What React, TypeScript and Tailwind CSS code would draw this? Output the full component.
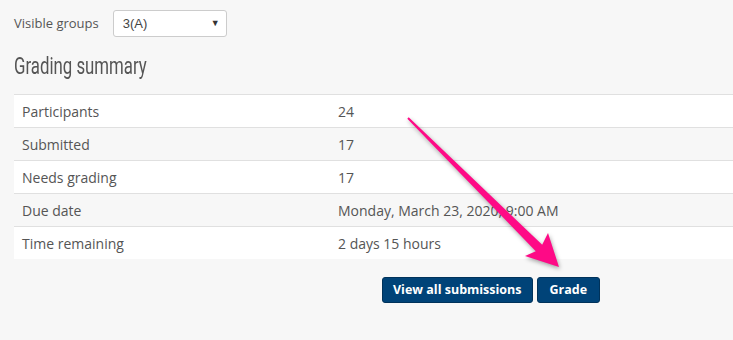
const rows = [
  ["Participants", "24"],
  ["Submitted", "17"],
  ["Needs grading", "17"],
  ["Due date", "Monday, March 23, 2020, 9:00 AM"],
  ["Time remaining", "2 days 15 hours"],
];

export default function App() {
  return (
    <div className="relative h-[340px] w-[733px] overflow-hidden bg-[#f7f7f7] font-['Open_Sans',sans-serif] text-[#555]">
      {/* group selector */}
      <div className="flex items-center gap-[14px] pl-[14px] pt-[10px]">
        <span className="text-[13px]">Visible groups</span>
        <div className="flex h-[27px] w-[114px] items-center justify-between rounded-[3px] border border-[#ccc] bg-white pl-[9px] pr-[6px] font-['Liberation_Sans',Arial,sans-serif] text-[13px] text-[#444]">
          <span>3(A)</span>
          <span className="text-[9px] text-[#333]">▼</span>
        </div>
      </div>

      <h2 className="mt-[14px] pl-[14px] text-[#555] leading-[30px]">
        <span className="inline-block origin-left scale-x-[0.7] font-['Roboto',sans-serif] text-[24px]">
          Grading summary
        </span>
      </h2>

      {/* summary table */}
      <div className="mt-[11px] pl-[14px]">
        {rows.map(([label, value], i) => (
          <div
            key={label}
            className={`flex h-[33px] items-center border-t border-[#e0e0e0] text-[14px] ${i % 2 === 1 ? "bg-[#f7f7f7]" : "bg-white"}`}
          >
            <div className="w-[316px] pl-[8px]">{label}</div>
            <div className="pl-[8px]">{value}</div>
          </div>
        ))}
      </div>

      {/* actions */}
      <div className="mt-[18px] flex gap-[4px] pl-[382px]">
        <button className="h-[26px] rounded-[3px] border border-[#00325a] bg-[#004378] px-[10px] text-[12.5px] font-bold text-white">
          View all submissions
        </button>
        <button className="h-[26px] rounded-[3px] border border-[#00325a] bg-[#004378] px-[12px] text-[12.5px] font-bold text-white">
          Grade
        </button>
      </div>

      {/* annotation arrow */}
      <svg
        className="pointer-events-none absolute left-0 top-0"
        width="733"
        height="340"
        style={{ filter: "drop-shadow(1px 2px 2px rgba(0,0,0,0.35))" }}
      >
        <polygon
          points="407.3,118.7 535.8,251.2 525,256 559,267 548,233 542.2,244.8 408.7,117.3"
          fill="#fe0a86"
        />
      </svg>
    </div>
  );
}
